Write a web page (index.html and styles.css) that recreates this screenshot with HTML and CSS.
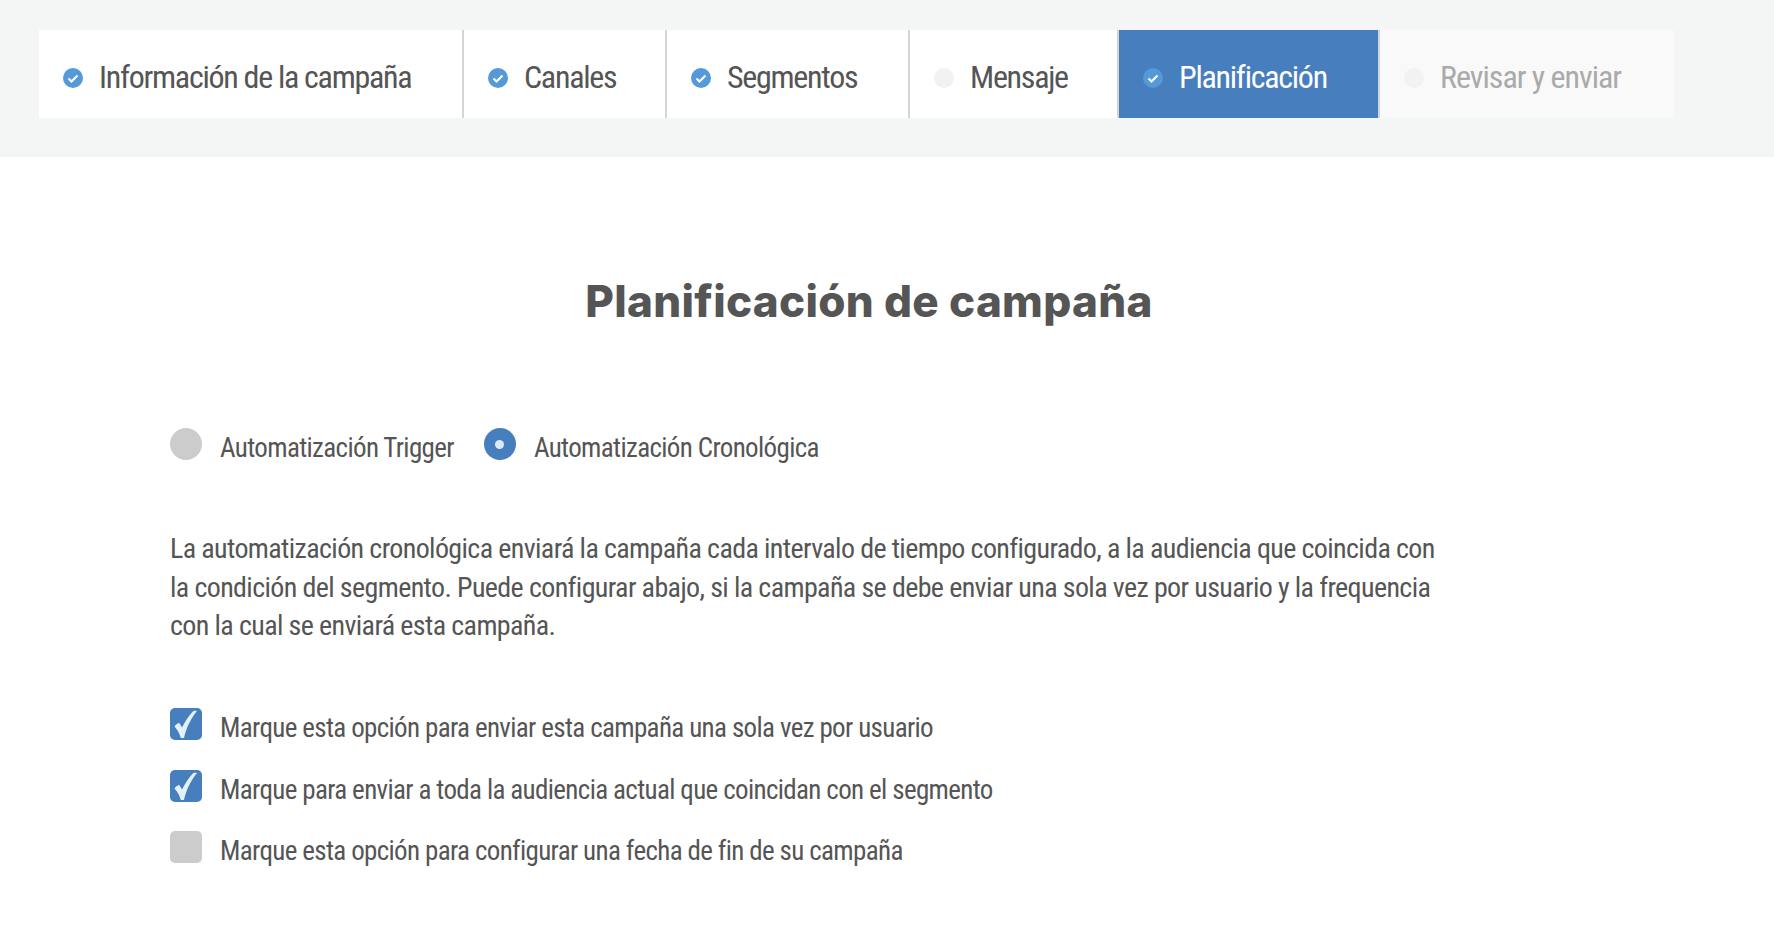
FILE: index.html
```html
<!DOCTYPE html>
<html lang="es">
<head>
  <meta charset="UTF-8">
  <title>Planificación de campaña</title>
  <link rel="stylesheet" href="styles.css">
</head>
<body>
<div class="steps-bar">
  <div class="steps">
    <div class="step step-info"><span class="dot done"><svg viewBox="0 0 20 20"><path d="M5.5 10.5l3 3 6-6"/></svg></span><span class="step-label">Información de la campaña</span></div>
    <div class="step step-channels"><span class="dot done"><svg viewBox="0 0 20 20"><path d="M5.5 10.5l3 3 6-6"/></svg></span><span class="step-label">Canales</span></div>
    <div class="step step-segments"><span class="dot done"><svg viewBox="0 0 20 20"><path d="M5.5 10.5l3 3 6-6"/></svg></span><span class="step-label">Segmentos</span></div>
    <div class="step step-message"><span class="dot"></span><span class="step-label">Mensaje</span></div>
    <div class="step step-plan active"><span class="dot done"><svg viewBox="0 0 20 20"><path d="M5.5 10.5l3 3 6-6"/></svg></span><span class="step-label">Planificación</span></div>
    <div class="step step-review disabled"><span class="dot"></span><span class="step-label">Revisar y enviar</span></div>
  </div>
</div>

<div class="main">
  <h1>Planificación de campaña</h1>

  <div class="radios">
    <div class="option"><span class="radio"></span><span class="text">Automatización Trigger</span></div>
    <div class="option"><span class="radio on"></span><span class="text">Automatización Cronológica</span></div>
  </div>

  <p class="intro">La automatización cronológica enviará la campaña cada intervalo de tiempo configurado, a la audiencia que coincida con la condición del segmento. Puede configurar abajo, si la campaña se debe enviar una sola vez por usuario y la frequencia con la cual se enviará esta campaña.</p>

  <div class="checks">
    <div class="option"><span class="checkbox on"><svg viewBox="0 0 32 32"><path d="M4.500 18.500c1.200-1.700 2.700-2.900 4.500-3.700 1 1.200 2.100 2.900 3 4.700C15 13.500 18.500 8 23 3.200c1.300-.4 2.700-.5 4-.2-6 7.500-10.500 16-13 27h-3.200C9.500 25.500 7.500 21.500 4.500 18.500z"/></svg></span><span class="text">Marque esta opción para enviar esta campaña una sola vez por usuario</span></div>
    <div class="option"><span class="checkbox on"><svg viewBox="0 0 32 32"><path d="M4.500 18.500c1.200-1.700 2.700-2.900 4.500-3.700 1 1.200 2.100 2.900 3 4.700C15 13.500 18.500 8 23 3.200c1.300-.4 2.700-.5 4-.2-6 7.500-10.500 16-13 27h-3.200C9.500 25.500 7.500 21.500 4.500 18.500z"/></svg></span><span class="text">Marque para enviar a toda la audiencia actual que coincidan con el segmento</span></div>
    <div class="option"><span class="checkbox"></span><span class="text">Marque esta opción para configurar una fecha de fin de su campaña</span></div>
  </div>
</div>
</body>
</html>
```

FILE: styles.css
```css
body {
  margin: 0;
  font-family: "Roboto", "Liberation Sans", sans-serif;
  font-stretch: condensed;
  background-color: white;
  color: #555;
}

.steps-bar {
  background-color: #f4f6f6;
  height: 157px;
  padding: 30px 0 0 39px;
  box-sizing: border-box;
}

.steps {
  display: flex;
  height: 88px;
}

.step {
  display: flex;
  align-items: center;
  background-color: white;
  border-right: 2px solid #d5d5d5;
  box-sizing: border-box;
  padding: 7px 0 0 24px;
  font-size: 32px;
  font-weight: 450;
  letter-spacing: -1.28px;
}

.step-label {
  margin-bottom: 2px;
}

.step-info { width: 425px; }
.step-channels { width: 203px; }
.step-segments { width: 243px; }
.step-message { width: 209px; }
.step-plan { width: 261px; }
.step-review { width: 294px; border-right: none; letter-spacing: -1px; }

.step.active {
  background-color: #477ebd;
  color: white;
}

.step.disabled {
  background-color: #f9f9f9;
  color: #aaa;
}

.dot {
  width: 20px;
  height: 20px;
  border-radius: 50%;
  background-color: #f2f2f2;
  margin-right: 16px;
  flex-shrink: 0;
}

.dot svg {
  display: block;
  fill: none;
  stroke: white;
  stroke-width: 2.2;
}

.dot.done {
  background-color: #5499d8;
}

.main {
  padding: 0 206px 0 170px;
}

h1 {
  margin: 0;
  padding-top: 116px;
  font-family: "Inter", sans-serif;
  font-stretch: normal;
  font-size: 44px;
  font-weight: 800;
  letter-spacing: 0.3px;
  line-height: 56px;
  text-align: center;
  color: #555;
}

.option {
  display: flex;
  align-items: flex-start;
  font-size: 27px;
  font-weight: 450;
  letter-spacing: -0.64px;
  line-height: 40px;
}

.radios {
  display: flex;
  gap: 30px;
  margin-top: 99px;
}

.radio {
  position: relative;
  width: 32px;
  height: 32px;
  border-radius: 50%;
  background-color: #ccc;
  margin-right: 18px;
}

.radio.on {
  background-color: #477ebd;
}

.radio.on::after {
  content: "";
  position: absolute;
  left: 11.5px;
  top: 11.5px;
  width: 9px;
  height: 9px;
  border-radius: 50%;
  background-color: #dcecf7;
}

.intro {
  margin: 62px 0 0;
  max-width: 1272px;
  font-size: 28px;
  font-weight: 450;
  letter-spacing: -0.62px;
  line-height: 38.6px;
}

.checks {
  margin-top: 62.3px;
}

.checks .option {
  height: 61.5px;
}

.checkbox {
  width: 32px;
  height: 32px;
  border-radius: 5px;
  background-color: #ccc;
  margin-right: 18px;
}

.checkbox.on {
  background-color: #477ebd;
}

.checkbox svg {
  display: block;
  fill: #e3f1fb;
}
```
